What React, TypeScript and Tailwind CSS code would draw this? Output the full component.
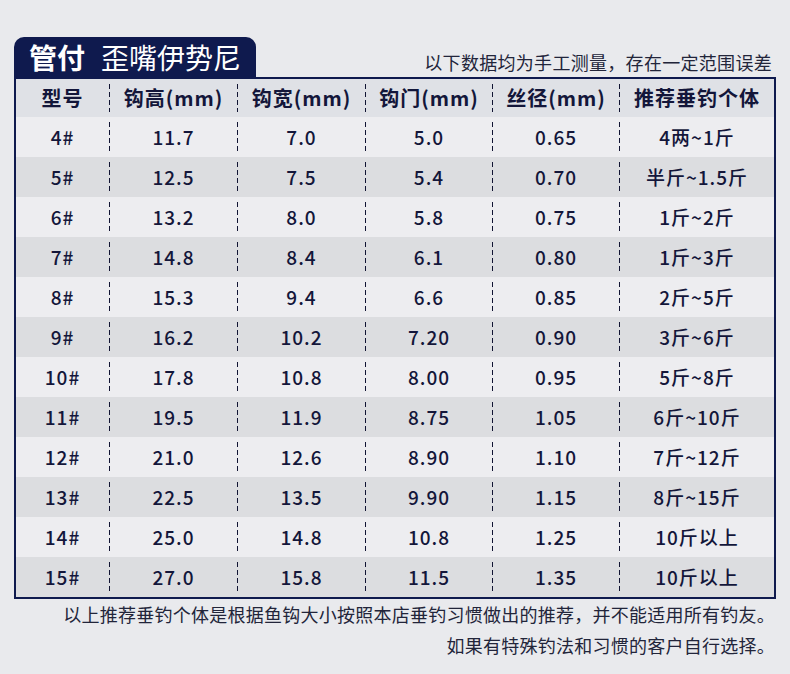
import React from 'react'

type Row = [string, string, string, string, string, string]

const headers: Row = ['型号', '钩高(mm)', '钩宽(mm)', '钩门(mm)', '丝径(mm)', '推荐垂钓个体']

const rows: Row[] = [
  ['4#', '11.7', '7.0', '5.0', '0.65', '4两~1斤'],
  ['5#', '12.5', '7.5', '5.4', '0.70', '半斤~1.5斤'],
  ['6#', '13.2', '8.0', '5.8', '0.75', '1斤~2斤'],
  ['7#', '14.8', '8.4', '6.1', '0.80', '1斤~3斤'],
  ['8#', '15.3', '9.4', '6.6', '0.85', '2斤~5斤'],
  ['9#', '16.2', '10.2', '7.20', '0.90', '3斤~6斤'],
  ['10#', '17.8', '10.8', '8.00', '0.95', '5斤~8斤'],
  ['11#', '19.5', '11.9', '8.75', '1.05', '6斤~10斤'],
  ['12#', '21.0', '12.6', '8.90', '1.10', '7斤~12斤'],
  ['13#', '22.5', '13.5', '9.90', '1.15', '8斤~15斤'],
  ['14#', '25.0', '14.8', '10.8', '1.25', '10斤以上'],
  ['15#', '27.0', '15.8', '11.5', '1.35', '10斤以上'],
]

// column widths between the dashed dividers
const widths = ['w-[93px]', 'w-[127px]', 'w-[127px]', 'w-[126px]', 'w-[126px]', 'w-[154px]']

const font = { fontFamily: '"Noto Sans CJK SC", "Noto Sans", sans-serif' }

function Divider() {
  return (
    <div className="w-px my-[5px] self-stretch bg-[repeating-linear-gradient(to_bottom,#111433_0_5px,transparent_5px_8px)]" />
  )
}

function TableRow({ cells, header, className }: { cells: Row; header?: boolean; className: string }) {
  return (
    <div className={`flex ${className}`}>
      {cells.map((cell, i) => (
        <React.Fragment key={i}>
          {i > 0 && <Divider />}
          <div
            className={`${widths[i]} flex items-center justify-center text-[#13163a] ${
              header ? 'text-[20px] font-bold tracking-[1px]' : 'text-[19px] font-medium tracking-[1px]'
            }`}
          >
            {cell}
          </div>
        </React.Fragment>
      ))}
    </div>
  )
}

export default function App() {
  return (
    <div className="w-[790px] h-[674px] bg-[#e9eaed] px-[14px] pt-[37px]" style={font}>
      {/* title tab + note */}
      <div className="flex items-end justify-between">
        <div className="h-[40px] w-[242px] rounded-t-[10px] bg-[#0f1a4e] flex items-center pl-[15px] text-white">
          <span className="text-[28px] font-bold leading-none">管付</span>
          <span className="ml-[16px] text-[28px] leading-none">歪嘴伊势尼</span>
        </div>
        <div className="mb-[2px] mr-[4px] text-[18px] tracking-[0.3px] leading-[26px] text-[#22253a]">
          以下数据均为手工测量，存在一定范围误差
        </div>
      </div>

      {/* table */}
      <div className="border-2 border-[#0f1a4e] bg-[#ececef]">
        <TableRow cells={headers} header className="h-[38px] bg-[#dfe1e6]" />
        {rows.map((r, i) => (
          <TableRow
            key={r[0]}
            cells={r}
            className={`h-[40px] ${i % 2 === 0 ? 'bg-[#ededf0]' : 'bg-[#dcdde0]'}`}
          />
        ))}
      </div>

      {/* footnotes */}
      <div className="text-right pr-[1px] text-[18px] tracking-[0.25px] leading-[31px] text-[#22253a]">
        <div>以上推荐垂钓个体是根据鱼钩大小按照本店垂钓习惯做出的推荐，并不能适用所有钓友。</div>
        <div>如果有特殊钓法和习惯的客户自行选择。</div>
      </div>
    </div>
  )
}
